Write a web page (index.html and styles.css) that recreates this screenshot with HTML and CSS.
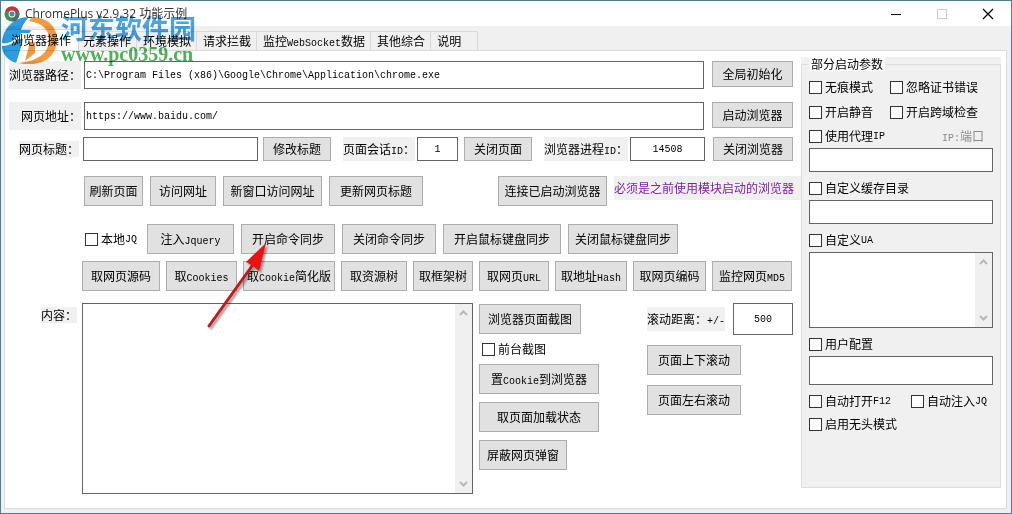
FILE: index.html
```html
<!DOCTYPE html>
<html lang="zh-CN">

<head>
    <meta charset="UTF-8">
    <meta name="viewport" content="width=device-width, initial-scale=1.0">
    <title>ChromePlus v2.9.32 功能示例</title>
    <link rel="stylesheet" href="styles.css">
</head>

<body>
    <div class="window">
        <div class="title-bar">
            <svg class="app-icon" viewBox="0 0 16 16" width="16" height="16">
                <circle cx="8" cy="8" r="7.5" fill="#3f8f52" />
                <path d="M8 8 L1.5 4.2 A7.5 7.5 0 0 1 14.5 4.5 Z" fill="#c8343a" />
                <path d="M8 8 L14.5 4.5 A7.5 7.5 0 0 1 8 15.5 Z" fill="#5c6b62" />
                <circle cx="8" cy="8" r="3.4" fill="#fff" />
                <circle cx="8" cy="8" r="2.5" fill="#4f86b8" />
            </svg>
            <h1>ChromePlus v2.9.32 功能示例</h1>
            <div class="window-buttons">
                <button aria-label="最小化"><svg viewBox="0 0 12 12" width="12" height="12"><path d="M1 6.5H11" stroke="#000" /></svg></button>
                <button aria-label="最大化" disabled><svg viewBox="0 0 12 12" width="12" height="12"><rect x="1.5" y="1.5" width="9" height="9" fill="none" stroke="#ccc" /></svg></button>
                <button aria-label="关闭"><svg viewBox="0 0 12 12" width="12" height="12"><path d="M1 1L11 11M11 1L1 11" stroke="#000" stroke-width="1.2" /></svg></button>
            </div>
        </div>

        <div class="tabs">
            <button class="tab active">浏览器操作</button>
            <button class="tab">元素操作</button>
            <button class="tab">环境模拟</button>
            <button class="tab">请求拦截</button>
            <button class="tab">监控<span class="en">WebSocket</span>数据</button>
            <button class="tab">其他综合</button>
            <button class="tab last">说明</button>
        </div>

        <div class="page">
            <div class="main">
                <div class="row address">
                    <label class="tall" for="path">浏览器路径：</label>
                    <input type="text" id="path" value="C:\Program Files (x86)\Google\Chrome\Application\chrome.exe">
                    <button>全局初始化</button>
                </div>
                <div class="row address">
                    <label class="tall" for="url">网页地址：</label>
                    <input type="text" id="url" value="https://www.baidu.com/">
                    <button>启动浏览器</button>
                </div>
                <div class="row session">
                    <div class="caption"><label for="title">网页标题：</label></div>
                    <input type="text" id="title">
                    <button>修改标题</button>
                    <label class="tag" for="session">页面会话<span class="en">ID</span>：</label>
                    <input type="text" id="session" class="number" value="1">
                    <button>关闭页面</button>
                    <label class="tag" for="pid">浏览器进程<span class="en">ID</span>：</label>
                    <input type="text" id="pid" class="number" value="14508">
                    <button>关闭浏览器</button>
                </div>
                <div class="row visit">
                    <button>刷新页面</button>
                    <button>访问网址</button>
                    <button>新窗口访问网址</button>
                    <button>更新网页标题</button>
                    <button class="connect">连接已启动浏览器</button>
                    <span class="notice">必须是之前使用模块启动的浏览器</span>
                </div>
                <div class="row sync">
                    <label class="check"><input type="checkbox">本地<span class="en">JQ</span></label>
                    <button>注入<span class="en">Jquery</span></button>
                    <button>开启命令同步</button>
                    <button>关闭命令同步</button>
                    <button>开启鼠标键盘同步</button>
                    <button>关闭鼠标键盘同步</button>
                </div>
                <div class="row fetch">
                    <button>取网页源码</button>
                    <button>取<span class="en">Cookies</span></button>
                    <button>取<span class="en">Cookie</span>简化版</button>
                    <button>取资源树</button>
                    <button>取框架树</button>
                    <button>取网页<span class="en">URL</span></button>
                    <button>取地址<span class="en">Hash</span></button>
                    <button>取网页编码</button>
                    <button>监控网页<span class="en">MD5</span></button>
                </div>
                <div class="row output">
                    <div class="caption"><label for="content">内容：</label></div>
                    <div class="memo">
                        <textarea id="content"></textarea>
                        <div class="scroll">
                            <svg viewBox="0 0 9 6" width="9" height="6"><path d="M1 5L4.5 1.5L8 5" /></svg>
                            <svg viewBox="0 0 9 6" width="9" height="6"><path d="M1 1L4.5 4.5L8 1" /></svg>
                        </div>
                    </div>
                    <div class="actions">
                        <button class="short">浏览器页面截图</button>
                        <label class="check"><input type="checkbox">前台截图</label>
                        <button class="wide">置<span class="en">Cookie</span>到浏览器</button>
                        <button class="wide">取页面加载状态</button>
                        <button>屏蔽网页弹窗</button>
                    </div>
                    <div class="scrolling">
                        <div class="distance">
                            <label class="tag" for="distance">滚动距离：<span class="en">+/-</span></label>
                            <input type="text" id="distance" class="number" value="500">
                        </div>
                        <button>页面上下滚动</button>
                        <button>页面左右滚动</button>
                    </div>
                </div>
            </div>

            <div class="side">
                <fieldset>
                    <legend>部分启动参数</legend>
                    <div class="options">
                        <label class="check"><input type="checkbox">无痕模式</label>
                        <label class="check"><input type="checkbox">忽略证书错误</label>
                        <label class="check"><input type="checkbox">开启静音</label>
                        <label class="check"><input type="checkbox">开启跨域检查</label>
                    </div>
                    <div class="proxy">
                        <label class="check"><input type="checkbox">使用代理<span class="en">IP</span></label>
                        <span class="hint"><span class="en">IP:</span>端口</span>
                    </div>
                    <input type="text" aria-label="代理IP">
                    <label class="check"><input type="checkbox">自定义缓存目录</label>
                    <input type="text" aria-label="缓存目录">
                    <label class="check"><input type="checkbox">自定义<span class="en">UA</span></label>
                    <div class="memo ua">
                        <textarea aria-label="UA"></textarea>
                        <div class="scroll">
                            <svg viewBox="0 0 9 6" width="9" height="6"><path d="M1 5L4.5 1.5L8 5" /></svg>
                            <svg viewBox="0 0 9 6" width="9" height="6"><path d="M1 1L4.5 4.5L8 1" /></svg>
                        </div>
                    </div>
                    <label class="check"><input type="checkbox">用户配置</label>
                    <input type="text" class="config" aria-label="用户配置">
                    <div class="launch">
                        <label class="check"><input type="checkbox">自动打开<span class="en">F12</span></label>
                        <label class="check"><input type="checkbox">自动注入<span class="en">JQ</span></label>
                    </div>
                    <label class="check"><input type="checkbox">启用无头模式</label>
                </fieldset>
            </div>
        </div>

        <!-- site watermark, lies over the title and tabs -->
        <div class="watermark">
            <svg viewBox="0 0 58 52" width="58" height="52">
                <path d="M1 29C2 14 13 3 28 3C25 6 22 10 20 16H30L27 22H17C12 28 7 30 1 29Z" fill="#2c9be0" />
                <path d="M1 32C8 32 13 29 17 25H22L16 49C7 47 1 40 1 32Z" fill="#2c9be0" />
                <path d="M31 3C46 3 57 13 56 27C55 41 44 50 30 50C25 50 21 50 17 49C37 47 48 39 48 26C48 15 41 9 28 7Z" fill="#f59a3c" />
                <path d="M20 19H42V38H36V25H29L20 49H15L23 25H18Z" fill="#fff" />
                <path d="M29 28H34V39L24 47Z" fill="#f59a3c" />
            </svg>
            <div class="site">
                <span class="site-name">河东软件园</span>
                <span class="site-url">www.pc0359.cn</span>
            </div>
        </div>

        <!-- pointer to the sync button -->
        <svg class="arrow" viewBox="0 0 70 95" width="70" height="95">
            <path d="M6 87L49 27" />
            <path class="head" d="M63 4L56 32L50 27L43 23Z" />
        </svg>
    </div>
</body>

</html>
```
FILE: styles.css
```css
* {
    box-sizing: border-box;
}

body {
    margin: 0;
    font-family: "Noto Sans CJK SC", sans-serif;
    font-size: 12px;
    line-height: 16px;
    color: #000;
}

button, input, textarea {
    font: inherit;
    color: inherit;
    margin: 0;
}

.en {
    font-family: "Liberation Mono", monospace;
    font-size: 10px;
    line-height: 1;
}

.window {
    position: relative;
    display: flex;
    flex-direction: column;
    min-height: 100vh;
    border: 1px solid #4a7f9c;
    background-color: #f0f0f0;
}

/* Title bar */
.title-bar {
    display: flex;
    align-items: center;
    height: 25px;
    padding-left: 3px;
    background-color: #fff;
}

.title-bar h1 {
    flex: 1;
    margin: 0 0 0 5px;
    font-family: "Open Sans", "Noto Sans CJK SC", sans-serif;
    font-size: 12px;
    font-weight: normal;
    color: #333;
}

.window-buttons {
    display: flex;
}

.window-buttons button {
    display: flex;
    align-items: center;
    justify-content: center;
    width: 46px;
    height: 25px;
    padding: 0;
    border: none;
    background: none;
}

/* Tabs */
.tabs {
    display: flex;
    align-items: flex-end;
    height: 24px;
    padding-left: 4px;
}

.tab {
    height: 19px;
    padding: 0 5px 0 6px;
    border: 1px solid #d9d9d9;
    border-width: 1px 1px 0 0;
    background-color: #f0f0f0;
    white-space: nowrap;
}

.tab.active {
    z-index: 1;
    height: 21px;
    margin-right: -2px;
    padding: 0 7px 0 6px;
    background-color: #fff;
}

.tab.last {
    padding-right: 16px;
}

.page {
    flex: 1;
    display: flex;
    margin: 0 4px 4px 3px;
    border: 1px solid #dcdcdc;
    background-color: #fff;
}

/* Shared controls */
.page button {
    height: 30px;
    padding: 0;
    border: 1px solid #adadad;
    background-color: #e1e1e1;
    white-space: nowrap;
}

.page button:hover {
    border-color: #0078d7;
    background-color: #e5f1fb;
}

input[type="text"] {
    min-width: 0;
    height: 24px;
    padding: 0 1px;
    border: 1px solid #646464;
    background-color: #fff;
    font-family: "Liberation Mono", monospace;
    font-size: 10px;
}

input.number {
    text-align: center;
}

.check {
    display: flex;
    align-items: center;
    height: 14px;
    white-space: nowrap;
}

.check .en {
    padding-top: 2px;
}

.check input {
    appearance: none;
    width: 13px;
    height: 13px;
    margin-right: 3px;
    border: 1px solid #333;
    background-color: #fff;
}

.check input:checked {
    background-color: #333;
    box-shadow: inset 0 0 0 2px #fff;
}

.memo {
    display: flex;
    border: 1px solid #646464;
    background-color: #fff;
}

.memo textarea {
    flex: 1;
    min-width: 0;
    padding: 2px;
    border: none;
    resize: none;
    outline: none;
}

.scroll {
    display: flex;
    flex-direction: column;
    align-items: center;
    justify-content: space-between;
    width: 17px;
    padding: 6px 0;
    background-color: #f0f0f0;
}

.scroll path {
    fill: none;
    stroke: #b8b8b8;
    stroke-width: 2;
}

/* Left part */
.main {
    flex: 1;
    display: flex;
    flex-direction: column;
    min-width: 0;
    padding: 10px 0 14px 4px;
}

.row {
    padding-right: 8px;
}

.address {
    display: flex;
    margin-bottom: 13px;
}

.address label {
    width: 72px;
    margin-right: 3px;
    background-color: #f0f0f0;
    line-height: 28px;
    text-align: right;
    white-space: nowrap;
}

.address input[type="text"] {
    flex: 1;
    height: 28px;
}

.address button {
    width: 81px;
    height: 26px;
    margin-left: 8px;
}

.session {
    display: grid;
    grid-template-columns: 72px 1fr 71px 82px 41px 72px 94px 75px 86px;
    grid-template-rows: 24px;
    column-gap: 2px;
    margin-top: -6px;
    margin-bottom: 15px;
}

.page .session button {
    justify-self: end;
    height: 24px;
    padding: 0 9px;
}

.caption {
    padding-right: 2px;
    text-align: right;
    white-space: nowrap;
}

.caption label, .tag, .notice {
    background-color: #f0f0f0;
    white-space: nowrap;
}

.caption label {
    display: inline-block;
    margin-top: 4px;
}

.tag {
    height: 24px;
    justify-self: end;
    line-height: 24px;
}

.visit, .sync, .fetch {
    display: grid;
    column-gap: 7px;
}

.visit {
    grid-template-columns: 59px 66px 99px 94px 1fr 187px;
    margin-left: 75px;
    margin-bottom: 18px;
    padding-right: 0;
}

.connect {
    justify-self: end;
    width: 109px;
}

.notice {
    height: 24px;
    color: #7a1fa8;
    line-height: 24px;
}

.sync {
    grid-template-columns: 55px 87px 94px 94px 118px 110px;
    margin-left: 76px;
    margin-bottom: 7px;
    align-items: center;
}

.fetch {
    grid-template-columns: 78px 71px 92px 66px 60px 70px 72px 73px 80px;
    column-gap: 6px;
    margin-left: 73px;
    margin-bottom: 12px;
}

.output {
    flex: 1;
    display: flex;
}

.output .caption {
    width: 70px;
    margin-right: 3px;
}

.output .memo {
    flex: 1;
}

.actions {
    display: flex;
    flex-direction: column;
    align-items: flex-start;
    gap: 8px;
    width: 122px;
    margin: 1px 46px 0 6px;
}

.actions .check {
    margin-left: 3px;
}

.page .actions button {
    padding: 0 7px;
}

.page .actions .short {
    padding: 0 8px;
}

.actions .wide {
    width: 120px;
}

.scrolling {
    display: flex;
    flex-direction: column;
    align-items: flex-start;
    gap: 10px;
    width: 146px;
}

.scrolling button {
    width: 94px;
}

.distance {
    display: flex;
    align-items: center;
    justify-content: space-between;
    width: 100%;
}

.distance input[type="text"] {
    width: 60px;
    height: 32px;
}

/* Launch parameters */
.side {
    width: 200px;
    margin: 6px 5px 20px 0;
    background-color: #f0f0f0;
}

fieldset {
    min-width: 0;
    height: 100%;
    margin: 0;
    padding: 9px 7px 0;
    border: 1px solid #dcdcdc;
}

legend {
    padding: 0 2px;
    background-color: #fff;
    line-height: 14px;
}

fieldset .check {
    margin: 9px 0 5px;
}

fieldset input[type="text"] {
    display: block;
    width: 184px;
}

.options .check, .proxy .check, .launch .check {
    margin: 0;
}

.options {
    display: grid;
    grid-template-columns: 81px 1fr;
    row-gap: 11px;
}

.proxy {
    display: flex;
    align-items: center;
    justify-content: space-between;
    margin: 10px 9px 5px 0;
    height: 14px;
}

.hint {
    color: #8c8c8c;
}

.ua {
    width: 184px;
    height: 76px;
}

fieldset input[type="text"].config {
    height: 29px;
}

.launch {
    display: grid;
    grid-template-columns: 102px 1fr;
    margin-top: 9px;
}

/* Overlays */
.watermark {
    position: absolute;
    top: 13px;
    left: 0;
    z-index: 2;
    display: flex;
    mix-blend-mode: multiply;
    pointer-events: none;
}

.site {
    display: flex;
    flex-direction: column;
    margin-left: 2px;
    white-space: nowrap;
}

.site-name {
    color: #4aa3e6;
    font-size: 27px;
    font-weight: bold;
    line-height: 28px;
}

.site-url {
    color: #4fb058;
    font-family: "Liberation Serif", serif;
    font-size: 20px;
    font-weight: bold;
    line-height: 24px;
}

.arrow {
    position: absolute;
    top: 238px;
    left: 202px;
    filter: drop-shadow(2px 2px 1px rgba(0, 0, 0, 0.4));
    pointer-events: none;
}

.arrow path {
    fill: none;
    stroke: #c41a1a;
    stroke-width: 3;
    stroke-linecap: round;
}

.arrow .head {
    fill: #f00f0f;
    stroke: none;
}
```
